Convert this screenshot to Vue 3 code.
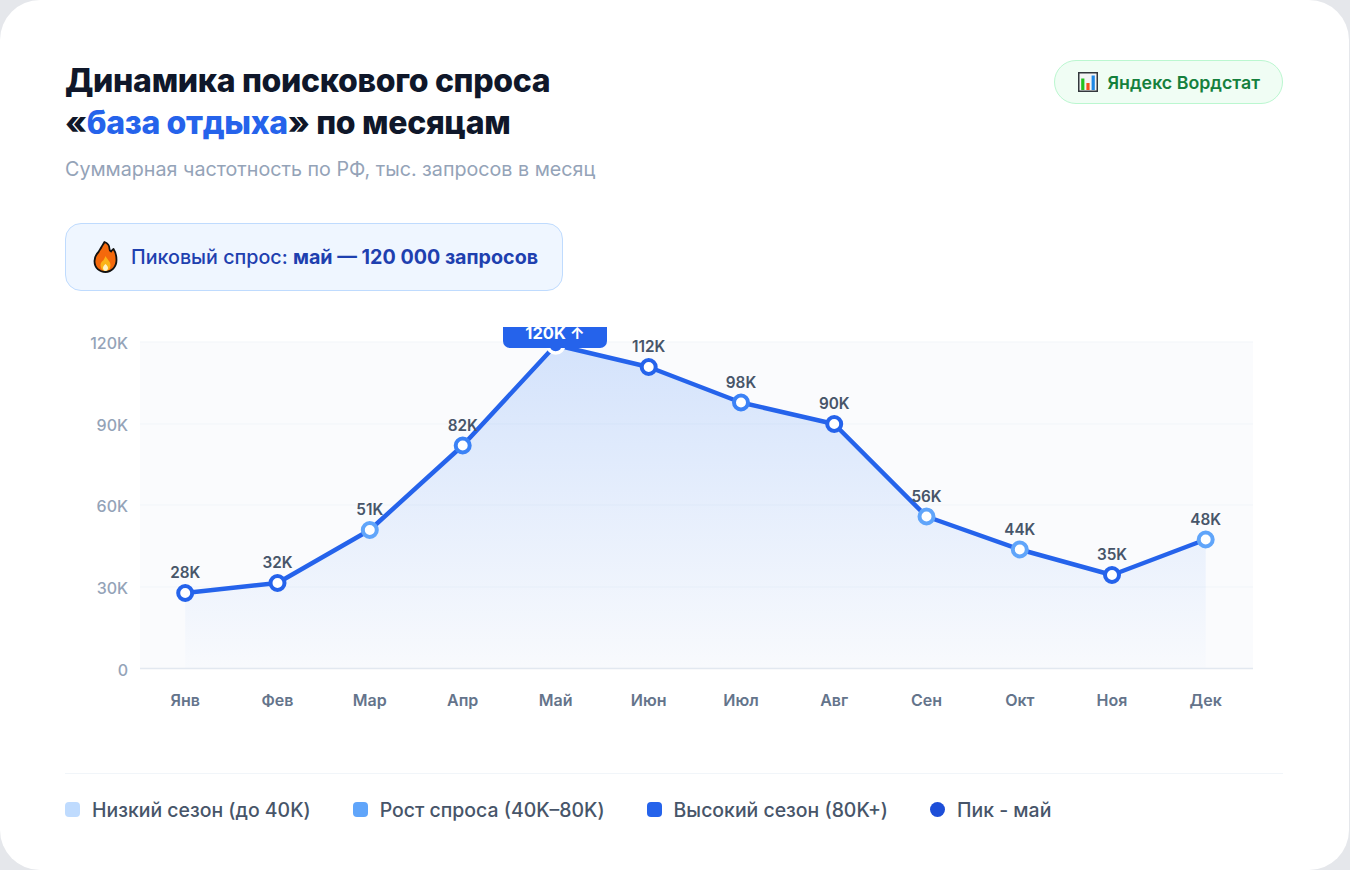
<script setup>
import { computed } from "vue";

// координаты точек сняты с графика
const months = [
  { name: "Янв", label: "28K", x: 185.2, y: 593, color: "#2563eb" },
  { name: "Фев", label: "32K", x: 277.5, y: 583, color: "#2563eb" },
  { name: "Мар", label: "51K", x: 369.8, y: 530, color: "#60a5fa" },
  { name: "Апр", label: "82K", x: 462.7, y: 445.5, color: "#3b82f6" },
  { name: "Май", label: "", x: 555.7, y: 345, color: "#fff" },
  { name: "Июн", label: "112K", x: 648.7, y: 367, color: "#2563eb" },
  { name: "Июл", label: "98K", x: 741, y: 402.5, color: "#3b82f6" },
  { name: "Авг", label: "90K", x: 834.2, y: 424, color: "#2563eb" },
  { name: "Сен", label: "56K", x: 926.5, y: 516.5, color: "#60a5fa" },
  { name: "Окт", label: "44K", x: 1019.8, y: 549.5, color: "#60a5fa" },
  { name: "Ноя", label: "35K", x: 1112, y: 575, color: "#2563eb" },
  { name: "Дек", label: "48K", x: 1205.7, y: 539.5, color: "#60a5fa" },
];

const yTicks = [
  { label: "120K", y: 342 },
  { label: "90K", y: 424 },
  { label: "60K", y: 505 },
  { label: "30K", y: 587 },
];

const legend = [
  { text: "Низкий сезон (до 40K)", color: "#bfdbfe" },
  { text: "Рост спроса (40K–80K)", color: "#60a5fa" },
  { text: "Высокий сезон (80K+)", color: "#2563eb" },
  { text: "Пик - май", color: "#1d4ed8", round: true },
];

const linePoints = computed(() => months.map((m) => `${m.x},${m.y}`).join(" "));
const areaPoints = computed(() => `185.2,668 ${linePoints.value} 1205.7,668`);
</script>

<template>
  <div class="page">
    <div class="card">
      <div class="header">
        <div>
          <h1 class="title">
            Динамика поискового спроса<br />
            «<span class="accent">база отдыха</span>» по месяцам
          </h1>
          <div class="subtitle">Суммарная частотность по РФ, тыс. запросов в месяц</div>
        </div>
        <div class="source">
          <svg class="source-icon" viewBox="0 0 20 20">
            <rect x="0.75" y="0.75" width="18.5" height="18.5" fill="#f3f4f5" stroke="#33383d" stroke-width="1.5" />
            <rect x="3.2" y="6.5" width="3.2" height="11.5" fill="#22c21f" />
            <rect x="8.4" y="11" width="3.2" height="7" fill="#f4511e" />
            <rect x="13.6" y="3.5" width="3.2" height="14.5" fill="#1e88e5" />
          </svg>
          Яндекс Вордстат
        </div>
      </div>

      <div class="peak">
        <svg class="peak-icon" viewBox="0 0 24 32">
          <path
            d="M11 1c3 1 5 3 5 7 0 1 .5 2 1.500 2.500C18 9.500 19 9 20 8c2 3 3 6 3 11 0 7-5 12-11 12S1 27 1 20c0-4 2-7 4-9 1-2 2-3 3-5 1-2 2-3 3-5z"
            fill="#f4690c"
            stroke="#111"
            stroke-width="1.800"
            stroke-linejoin="round"
          />
          <path d="M12 15c1 3 5 5 5 9 0 3-2 6-5 6s-5-3-5-6c0-2 1-3 2-4 1 0 2-3 3-5z" fill="#fbb417" />
          <path d="M12 23c1 1 2.500 2 2.500 4 0 1.500-1 3-2.500 3s-2.500-1.500-2.500-3c0-2 1.500-3 2.500-4z" fill="#fff3c4" />
        </svg>
        <span>Пиковый спрос: <b>май — 120 000 запросов</b></span>
      </div>

      <svg class="chart" viewBox="65 327 1218 393">
        <defs>
          <linearGradient id="area" x1="0" y1="0" x2="0" y2="1">
            <stop offset="0" stop-color="#3b82f6" stop-opacity="0.2" />
            <stop offset="1" stop-color="#3b82f6" stop-opacity="0.01" />
          </linearGradient>
        </defs>

        <rect x="140" y="342" width="1113" height="326" fill="#fafbfd" />
        <line
          v-for="t in yTicks"
          :key="t.label"
          x1="140"
          x2="1253"
          :y1="t.y"
          :y2="t.y"
          class="grid"
        />
        <line x1="140" x2="1253" y1="668.500" y2="668.500" class="axis" />

        <text v-for="t in yTicks" :key="t.label" x="128" :y="t.y + 7" class="y-label">{{ t.label }}</text>
        <text x="128" y="676" class="y-label">0</text>

        <polygon :points="areaPoints" fill="url(#area)" />
        <polyline :points="linePoints" class="line" />

        <g v-for="m in months" :key="m.name">
          <circle
            v-if="m.label"
            :cx="m.x"
            :cy="m.y"
            r="7"
            fill="#fff"
            :stroke="m.color"
            stroke-width="4"
          />
          <circle v-else :cx="m.x" :cy="m.y" r="8" fill="#2563eb" stroke="#fff" stroke-width="3.500" />
          <text v-if="m.label" :x="m.x" :y="m.y - 15" class="point-label">{{ m.label }}</text>
          <text :x="m.x" y="706" class="x-label">{{ m.name }}</text>
        </g>

        <rect x="503" y="315" width="104" height="33" rx="7" fill="#2563eb" />
        <text x="555" y="339" class="peak-label">120K ↑</text>
      </svg>

      <div class="legend">
        <div v-for="item in legend" :key="item.text" class="legend-item">
          <span
            class="swatch"
            :class="{ round: item.round }"
            :style="{ backgroundColor: item.color }"
          ></span>
          {{ item.text }}
        </div>
      </div>
    </div>
  </div>
</template>

<style scoped>
.page {
  width: 1349px;
  height: 870px;
  background-color: #e5e7eb;
}

.card {
  box-sizing: border-box;
  height: 870px;
  padding: 60px 66px 0 65px;
  background-color: #fff;
  border-radius: 40px;
  font-family: Inter, "Liberation Sans", sans-serif;
}

.header {
  display: flex;
  justify-content: space-between;
  align-items: flex-start;
}

.title {
  margin: 0;
  font-size: 32px;
  font-weight: 800;
  line-height: 42px;
  letter-spacing: -0.01em;
  color: #0f172a;
}

.accent {
  color: #2563eb;
}

.subtitle {
  margin-top: 13px;
  font-size: 19.7px;
  line-height: 24px;
  color: #94a3b8;
}

.source {
  display: flex;
  align-items: center;
  gap: 9px;
  box-sizing: border-box;
  height: 44px;
  padding: 0 22px 0 23px;
  background-color: #f0fdf4;
  border: 1px solid #bbf7d0;
  border-radius: 22px;
  font-size: 17.8px;
  font-weight: 600;
  color: #15803d;
}

.source-icon {
  width: 20px;
  height: 20px;
}

.peak {
  display: inline-flex;
  align-items: center;
  gap: 13px;
  box-sizing: border-box;
  height: 68px;
  margin-top: 42px;
  padding: 0 24px 0 27px;
  background-color: #eff6ff;
  border: 1px solid #bfdbfe;
  border-radius: 16px;
  font-size: 19.7px;
  font-weight: 500;
  color: #1e40af;
}

.peak b {
  font-weight: 700;
}

.peak-icon {
  width: 25px;
  height: 32px;
}

.chart {
  display: block;
  width: 1218px;
  height: 393px;
  margin-top: 36px;
}

.grid {
  stroke: #f1f5f9;
  stroke-width: 1;
}

.axis {
  stroke: #e2e8f0;
  stroke-width: 1.500;
}

.line {
  fill: none;
  stroke: #2563eb;
  stroke-width: 4.500;
  stroke-linejoin: round;
  stroke-linecap: round;
}

.y-label {
  font-size: 16px;
  font-weight: 500;
  fill: #94a3b8;
  text-anchor: end;
}

.x-label {
  font-size: 16px;
  font-weight: 600;
  fill: #64748b;
  text-anchor: middle;
}

.point-label {
  font-size: 15.3px;
  font-weight: 600;
  fill: #475569;
  text-anchor: middle;
}

.peak-label {
  font-size: 16.5px;
  font-weight: 700;
  fill: #fff;
  text-anchor: middle;
}

.legend {
  display: flex;
  align-items: center;
  gap: 42px;
  height: 71px;
  margin-top: 53px;
  border-top: 1px solid #f1f5f9;
}

.legend-item {
  display: flex;
  align-items: center;
  gap: 12px;
  font-size: 19.45px;
  font-weight: 500;
  color: #475569;
}

.swatch {
  width: 15px;
  height: 15px;
  border-radius: 4px;
}

.swatch.round {
  border-radius: 50%;
}
</style>

<style>
body {
  background-color: #e5e7eb;
}
</style>
